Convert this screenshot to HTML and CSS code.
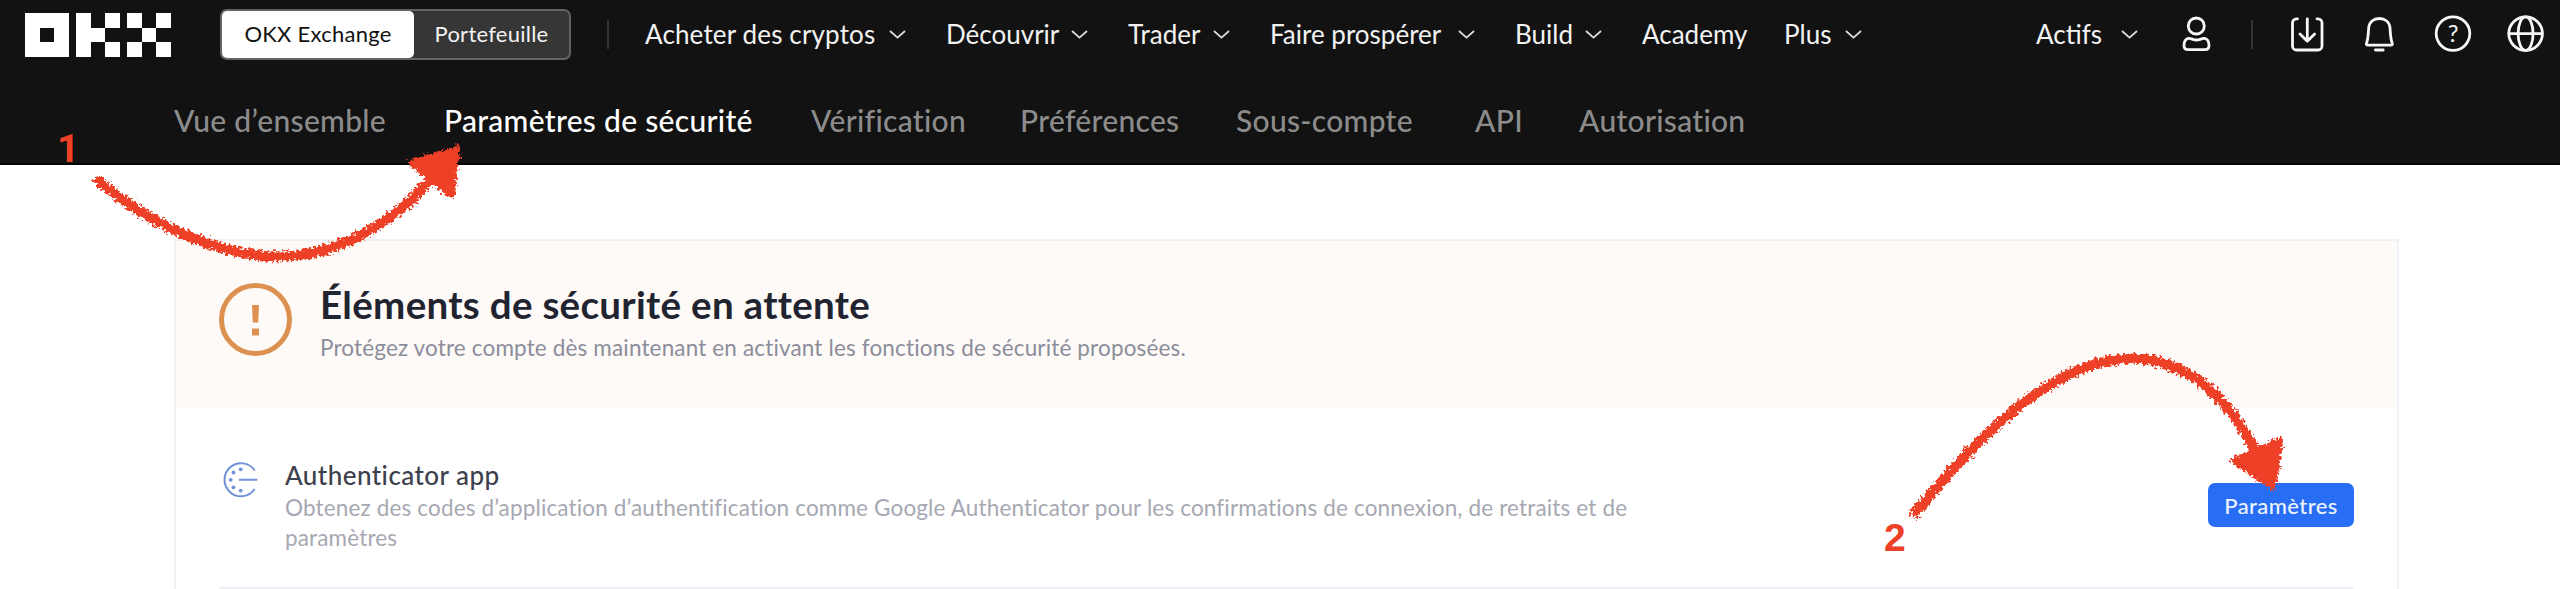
FILE: index.html
```html
<!DOCTYPE html>
<html lang="fr">
<head>
    <meta charset="utf-8">
    <title>OKX - Paramètres de sécurité</title>
    <link rel="stylesheet" href="styles.css">
</head>
<body>

<header class="header">
    <div class="topbar">
        <svg class="logo" viewBox="0 0 146 44" shape-rendering="crispEdges">
            <path fill="#fff" fill-rule="evenodd" d="M0 0h44v44H0zM14.6 14.6v14.7h14.6V14.6z"/>
            <path fill="#fff" d="M51 0h14.6v14.6h14.6v14.7H65.6V44H51zM80.2 0h14.6v14.6H80.2zM80.2 29.3h14.6V44H80.2zM102.2 0h14.6v14.6h-14.6zM131.4 0H146v14.6h-14.6zM116.8 14.6h14.6v14.7h-14.6zM102.2 29.3h14.6V44h-14.6zM131.4 29.3H146V44h-14.6z"/>
        </svg>

        <div class="switch">
            <div class="switch-item switch-on">OKX Exchange</div>
            <div class="switch-item">Portefeuille</div>
        </div>
        <div class="divider"></div>

        <nav class="menu">
            <div class="menu-item">Acheter des cryptos <svg class="chevron" viewBox="0 0 17 9"><path d="M1 1l7.5 6.6L16 1"/></svg></div>
            <div class="menu-item">Découvrir <svg class="chevron" viewBox="0 0 17 9"><path d="M1 1l7.5 6.6L16 1"/></svg></div>
            <div class="menu-item">Trader <svg class="chevron" viewBox="0 0 17 9"><path d="M1 1l7.5 6.6L16 1"/></svg></div>
            <div class="menu-item">Faire prospérer <svg class="chevron" viewBox="0 0 17 9"><path d="M1 1l7.5 6.6L16 1"/></svg></div>
            <div class="menu-item">Build <svg class="chevron" viewBox="0 0 17 9"><path d="M1 1l7.5 6.6L16 1"/></svg></div>
            <div class="menu-item">Academy</div>
            <div class="menu-item">Plus <svg class="chevron" viewBox="0 0 17 9"><path d="M1 1l7.5 6.6L16 1"/></svg></div>
        </nav>

        <div class="tools">
            <div class="assets">Actifs <svg class="chevron" viewBox="0 0 17 9"><path d="M1 1l7.5 6.6L16 1"/></svg></div>
            <svg class="icon user" viewBox="0 0 40 40">
                <circle cx="20.3" cy="12" r="8"/>
                <path d="M12.5 24.4C15 24 17 26 20.5 26S26 24 28.5 24.4C31.5 25 33 28 33 31.5c0 3-1.5 4.2-4 4.2H12c-2.5 0-4-1.2-4-4.2 0-3.5 1.5-6.5 4.5-7.1z"/>
            </svg>
            <div class="divider"></div>
            <div class="icons">
                <svg class="icon" viewBox="0 0 40 40">
                    <path d="M10.5 4.8H9.500a4 4 0 0 0-4 4V32a4 4 0 0 0 4 4H31a4 4 0 0 0 4-4V8.800a4 4 0 0 0-4-4h-1"/>
                    <path d="M20.3 4.8v22.4M13 20l7.3 7.2 7.3-7.2"/>
                </svg>
                <svg class="icon" viewBox="0 0 40 40">
                    <path d="M8 31.2h22.8c1.5 0 1.8-1 1.4-2C30.5 25 30.5 20 30 14 29.5 8 25 4.5 19.3 4.5S9.1 8 8.7 14C8.2 20 8.2 25 6.5 29.2c-.4 1-.1 2 1.5 2z"/>
                    <path d="M15.4 36h7.8"/>
                </svg>
                <svg class="icon" viewBox="0 0 40 40">
                    <circle cx="20" cy="19.6" r="16.8"/>
                    <text class="question" x="20" y="28">?</text>
                </svg>
                <svg class="icon" viewBox="0 0 40 40">
                    <circle cx="19.6" cy="19.6" r="16.8"/>
                    <ellipse cx="19.6" cy="19.6" rx="7.5" ry="16.8"/>
                    <path d="M3 19.6h33"/>
                </svg>
            </div>
        </div>
    </div>

    <nav class="tabs">
        <span>Vue d’ensemble</span>
        <span class="active">Paramètres de sécurité</span>
        <span>Vérification</span>
        <span>Préférences</span>
        <span>Sous-compte</span>
        <span>API</span>
        <span>Autorisation</span>
    </nav>
</header>

<main class="card">
    <section class="banner">
        <svg class="warning" viewBox="0 0 73 73">
            <circle cx="36.5" cy="36.5" r="34" fill="none" stroke="#dc9150" stroke-width="5"/>
            <path fill="#dc9150" d="M33 22h7l-.8 17.500h-5.400zM33 45.500h7v7h-7z"/>
        </svg>
        <div>
            <h1>Éléments de sécurité en attente</h1>
            <p class="subtitle">Protégez votre compte dès maintenant en activant les fonctions de sécurité proposées.</p>
        </div>
    </section>

    <section class="option">
        <svg class="auth" viewBox="0 0 44 44">
            <path d="M35.7 12.5A16.500 16.500 0 1 0 35.700 31M20 21.800h18.300" fill="none" stroke="#7090d8" stroke-width="2"/>
            <g fill="#7090d8">
                <circle cx="21.7" cy="11.3" r="1.9"/>
                <circle cx="14.5" cy="14.5" r="1.9"/>
                <circle cx="11.7" cy="21.8" r="1.9"/>
                <circle cx="14.5" cy="29.3" r="1.9"/>
                <circle cx="21.7" cy="32.6" r="1.9"/>
            </g>
        </svg>
        <div class="option-text">
            <h2>Authenticator app</h2>
            <p>Obtenez des codes d’application d’authentification comme Google Authenticator pour les confirmations de connexion, de retraits et de paramètres</p>
        </div>
        <button class="btn">Paramètres</button>
    </section>
</main>

<!-- Flèches des étapes 1 et 2 -->
<svg class="steps" viewBox="0 0 2560 589">
    <defs>
        <filter id="crayon" x="-10%" y="-15%" width="120%" height="130%">
            <feTurbulence type="fractalNoise" baseFrequency="0.35" numOctaves="2" seed="4" result="noise"/>
            <feDisplacementMap in="SourceGraphic" in2="noise" scale="10" xChannelSelector="R" yChannelSelector="G"/>
        </filter>
    </defs>
    <text class="one" x="57" y="162">1</text>
    <text x="1884" y="551">2</text>
    <g filter="url(#crayon)">
        <path class="line" d="M99 181C145 221 215 256 279 256.500C346 256 402 215 435 174"/>
        <path class="head" d="M411 163L457 149L452 196Z"/>
        <path class="line" d="M1915 513C1967 450 2050 357 2134 358.500C2195 361 2231 405 2255 450"/>
        <path class="head" d="M2234 461L2281 440L2273 487Z"/>
    </g>
</svg>

</body>
</html>
```
FILE: styles.css
```css
* {
    box-sizing: border-box;
}
body {
    margin: 0;
    height: 589px;
    overflow: hidden;
    position: relative;
    background: #fff;
    font-family: Lato, "Noto Sans", sans-serif;
}
h1, h2, p {
    margin: 0;
}

/* header */
.header {
    height: 165px;
    background: #121212;
    border-bottom: 2px solid #050505;
}
.topbar {
    display: flex;
    align-items: center;
    height: 68px;
    padding: 0 14px 0 25px;
    color: #f2f2f2;
    font-size: 26px;
}
.logo {
    width: 146px;
    height: 44px;
    margin-top: 2px;
}
.switch {
    display: flex;
    width: 351px;
    height: 51px;
    margin: 1px 0 0 49px;
    border: 2px solid #636363;
    border-radius: 7px;
    background: #363636;
    font-size: 22px;
    letter-spacing: 0.25px;
}
.switch-item {
    flex: 1;
    line-height: 46px;
    text-align: center;
}
.switch-on {
    flex: 0 0 192px;
    border-radius: 5px;
    background: #fff;
    color: #121212;
}
.divider {
    width: 2px;
    height: 29px;
    background: #333;
}
.topbar > .divider {
    margin-left: 36px;
}
.menu {
    display: grid;
    grid-template-columns: 261px 142px 102px 205px 87px 102px 78px;
    column-gap: 40px;
    margin-left: 36px;
}
.menu-item, .assets {
    display: flex;
    align-items: center;
    justify-content: space-between;
    white-space: nowrap;
}
.menu-item:first-child {
    letter-spacing: 0.15px;
}
.chevron {
    width: 17px;
    height: 9px;
    fill: none;
    stroke: #ddd;
    stroke-width: 1.8;
}
.tools {
    display: flex;
    align-items: center;
    margin-left: auto;
}
.assets {
    width: 102px;
}
.icons {
    display: flex;
    gap: 33px;
    margin-left: 34px;
}
.icon {
    width: 40px;
    height: 40px;
    fill: none;
    stroke: #f7f7f7;
    stroke-width: 2.8;
    stroke-linecap: round;
    stroke-linejoin: round;
}
.user {
    margin: 0 35px 0 38px;
}
.question {
    fill: #f7f7f7;
    stroke: none;
    font-size: 24px;
    text-anchor: middle;
}

.tabs {
    display: grid;
    grid-template-columns: 214px 311px 153px 160px 183px 48px 170px;
    column-gap: 56px;
    padding: 29px 0 0 174px;
    color: #8c8c8c;
    font-size: 30px;
    font-weight: 500;
    line-height: 46px;
    letter-spacing: 0.3px;
    white-space: nowrap;
}
.tabs .active {
    color: #fff;
}

/* card */
.card {
    width: 2225px;
    height: 360px;
    margin: 74px 0 0 174px;
    border: 2px solid #f0f1f4;
}
.banner {
    display: flex;
    height: 166px;
    padding: 41px 43px 0;
    background: #fefaf7;
}
.warning {
    width: 73px;
    height: 73px;
    margin: 1px 28px 0 0;
}
h1 {
    color: #1f2430;
    font-size: 38.5px;
    line-height: 44px;
    letter-spacing: 0.3px;
}
.subtitle {
    margin-top: 7px;
    color: #8b8d9b;
    font-size: 22.5px;
    line-height: 30px;
    letter-spacing: 0.15px;
}
.option {
    display: flex;
    align-items: center;
    margin: 0 43px;
    padding: 51px 0 35px;
    border-bottom: 2px solid #eff0f4;
}
.auth {
    align-self: flex-start;
    width: 44px;
    height: 44px;
    margin-right: 22px;
}
.option-text {
    width: 1390px;
}
h2 {
    color: #3c404d;
    font-size: 26px;
    font-weight: 500;
    line-height: 35px;
    letter-spacing: 0.45px;
}
.option p {
    color: #a6a8b2;
    font-size: 22.5px;
    line-height: 29.5px;
    letter-spacing: 0.15px;
}
.btn {
    width: 146px;
    height: 44px;
    margin-left: auto;
    padding: 0;
    border: 0;
    border-radius: 7px;
    background: #276ef5;
    color: #eef5ff;
    font: 500 22px Lato, sans-serif;
    letter-spacing: 0.4px;
}

/* annotations */
.steps {
    position: absolute;
    left: 0;
    top: 0;
    width: 2560px;
    height: 589px;
    fill: #ee4027;
    font: bold 39px "Liberation Sans", Arial, sans-serif;
}
.steps .one {
    font-family: Roboto, sans-serif;
}
.steps .line {
    fill: none;
    stroke: #ee4027;
    stroke-width: 10;
    stroke-linecap: round;
}
.steps .head {
    stroke: #ee4027;
    stroke-width: 6;
    stroke-linejoin: round;
}
```
